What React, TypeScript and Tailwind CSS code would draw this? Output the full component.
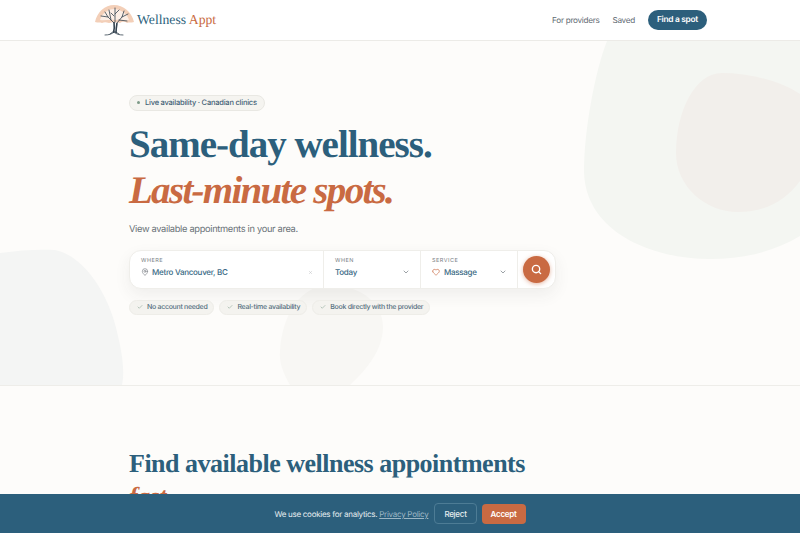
import { Check, ChevronDown, Heart, MapPin, Search, X } from "lucide-react";

const serif = "font-['Liberation_Serif',serif]";

function Tree() {
  return (
    <svg viewBox="0 0 42 32" className="w-[42px] h-[32px]" fill="none">
      <path d="M2 18C4 8 12 1 21 1s18 7 20 17c-3 1-5 0-7 1-3-2-5-1-7 0-4-1-8-1-11 0-3-1-5-1-7 0-2-1-4 0-7-1Z" fill="#f3cfb8" />
      <path d="M7 16C9 9 15 5 21 5s13 4 15 11c-5 1-9-1-14 0-5-1-10 1-15 0Z" fill="#fbeee6" />
      <path d="M20.5 29c1-4 1-7 .5-11M23 29c0-4 .5-7 1-10" stroke="#33424f" strokeWidth="1.6" />
      <path d="M21 19 15 13l-3-5M15 13 8 12M18 16l-2-10M24 19l5-6 2-6M29 13l6-3M26 16l8 1M22 18V4M21 12l-3-3M22 10l4-4M12 31c4 0 7-1 9-3 2 2 5 3 9 3M17 30l4-3 5 3" stroke="#33424f" strokeWidth=".8" strokeLinecap="round" />
    </svg>
  );
}

function Field({ label, children, className }: { label: string; children: React.ReactNode; className: string }) {
  return (
    <div className={`flex flex-col justify-center pb-[4px] border-r border-[#efeeea] ${className}`}>
      <span className="text-[5.5px] leading-[10px] tracking-[0.5px] text-[#7b8186]">{label}</span>
      <div className="flex items-center text-[8px] leading-[12px] tracking-[-0.28px] font-medium text-[#3a6a85]">{children}</div>
    </div>
  );
}

function Perk({ text }: { text: string }) {
  return (
    <span className="flex items-center gap-[4px] h-[15px] pl-[7px] pr-[6px] rounded-full bg-[#f4f3ef] border border-[#eeede8] text-[7px] tracking-[-0.3px] font-medium text-[#56707f]">
      <Check className="w-[6px] h-[6px] text-[#7d9a88]" strokeWidth={2} />
      {text}
    </span>
  );
}

export default function App() {
  return (
    <div className="relative h-[533px] overflow-hidden bg-[#fdfcfa] font-['Inter',sans-serif] [text-rendering:geometricPrecision]">
      <header className="h-[41px] bg-white border-b border-[#ecebe7]">
        <div className="w-[614px] ml-[93px] h-full flex items-center justify-between">
          <div className="flex items-center gap-[2px]">
            <Tree />
            <span className={`${serif} text-[13.7px] text-[#2c5f7c] mt-[1px]`}>
              Wellness <span className="text-[#c96a42]">Appt</span>
            </span>
          </div>
          <nav className="flex items-center text-[8.2px] tracking-[-0.3px] text-[#5f6b73]">
            <a className="mr-[13px]">For providers</a>
            <a className="mr-[13px]">Saved</a>
            <a className="flex items-center h-[20px] px-[9px] rounded-full bg-[#2c5f7c] text-[8.4px] text-white font-semibold">Find a spot</a>
          </nav>
        </div>
      </header>

      <section className="relative h-[345px] overflow-hidden border-b border-[#eeede9] pl-[129px] pt-[45px]">
        {/* background blobs */}
        <svg className="absolute left-0 top-0 w-[800px] h-[344px]" viewBox="0 0 800 344" fill="none">
          <path d="M607 0C595 30 584 90 584 129C584 190 650 218 710 218C745 218 775 210 800 195V0Z" fill="#f4f6f2" />
          <path d="M800 53C780 40 750 32 722 32C695 32 676 70 676 112C676 145 705 171 738 171C765 171 785 160 800 140Z" fill="#f2efeb" />
          <path d="M0 212C20 209 40 208 55 209C85 215 110 255 118 295C124 320 124 335 122 344H0Z" fill="#f4f5f4" />
          <path d="M330 244C360 244 383 262 383 286C383 310 365 330 350 344H290C282 330 279 320 280 310C282 275 300 244 330 244Z" fill="#f8f7f4" />
        </svg>

        <div className="relative">
          <div className="inline-flex items-center gap-[5px] h-[16px] px-[7px] rounded-full bg-[#f5f4f0] border border-[#e9e8e3] text-[7.5px] tracking-[-0.22px] font-medium text-[#3f6075]">
            <span className="w-[3px] h-[3px] rounded-full bg-[#7d9a88]" />
            Live availability · Canadian clinics
          </div>
          <h1 className={`${serif} mt-[11px] text-[39px] leading-[46px] font-bold tracking-[-1px] text-[#2c5f7c]`}>
            Same-day wellness.
            <br />
            <em className="text-[#c96a42] tracking-[-1.7px]">Last-minute spots.</em>
          </h1>
          <p className="mt-[8px] text-[9.3px] leading-[16px] tracking-[-0.33px] text-[#6a7278]">View available appointments in your area.</p>

          <div className="mt-[12px] flex w-[427px] h-[39px] rounded-[12px] bg-white border border-[#efeeea] shadow-[0_6px_16px_rgba(60,60,50,0.07)]">
            <Field label="WHERE" className="w-[194px] pl-[11px] pr-[10px]">
              <MapPin className="w-[8px] h-[8px] mr-[3px] text-[#7b8186]" />
              <span>Metro Vancouver, BC</span>
              <X className="w-[5px] h-[5px] ml-auto text-[#b5b8ba]" />
            </Field>
            <Field label="WHEN" className="w-[97px] pl-[11px] pr-[10px]">
              <span>Today</span>
              <ChevronDown className="w-[8px] h-[8px] ml-auto text-[#6a7278]" />
            </Field>
            <Field label="SERVICE" className="w-[97px] pl-[11px] pr-[10px]">
              <span className="flex items-center gap-[4px]">
                <Heart className="w-[8px] h-[8px] text-[#c96a42]" />
                Massage
              </span>
              <ChevronDown className="w-[8px] h-[8px] ml-auto text-[#6a7278]" />
            </Field>
            <div className="flex-1 flex items-center justify-center">
              <span className="flex items-center justify-center w-[27px] h-[27px] rounded-full bg-[#c96a42] shadow-[0_1px_4px_rgba(201,106,66,0.5)]">
                <Search className="w-[11px] h-[11px] text-white" strokeWidth={3} />
              </span>
            </div>
          </div>

          <div className="mt-[11px] flex gap-[5px]">
            <Perk text="No account needed" />
            <Perk text="Real-time availability" />
            <Perk text="Book directly with the provider" />
          </div>
        </div>
      </section>

      <section className="pl-[129px] pt-[61px]">
        <h2 className={`${serif} w-[430px] text-[26px] leading-[33px] font-bold tracking-[-0.5px] text-[#2c5f7c]`}>
          Find available wellness appointments <em className="text-[#c96a42]">fast</em>
        </h2>
      </section>

      <div className="absolute left-0 right-0 bottom-0 h-[39px] flex items-center justify-center bg-[#2c5f7c] text-[8px] tracking-[-0.27px] text-[#e6edf0]">
        <span>
          We use cookies for analytics. <a className="underline text-[#9cb6c4]">Privacy Policy</a>
        </span>
        <button className="ml-[6px] h-[21px] px-[9px] rounded-[4px] border border-[#4d7c95] font-medium">Reject</button>
        <button className="ml-[5px] h-[20px] px-[9px] rounded-[4px] bg-[#c96a42] font-semibold text-white">Accept</button>
      </div>
    </div>
  );
}
